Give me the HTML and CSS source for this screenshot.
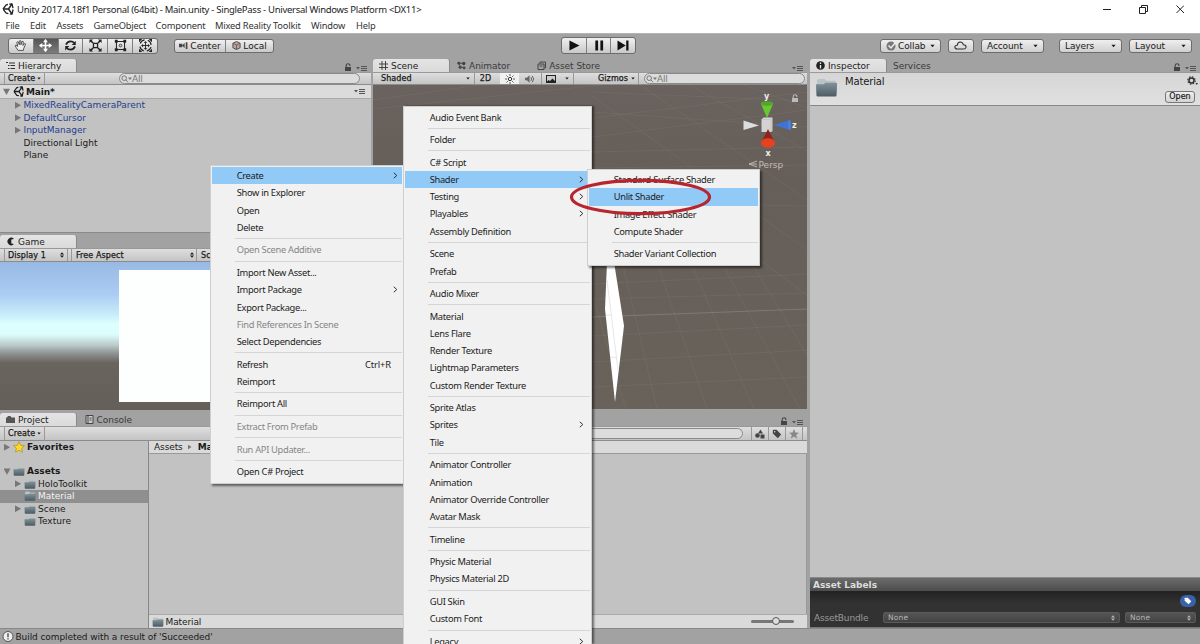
FILE: index.html
```html
<!DOCTYPE html>
<html lang="en">
<head>
<meta charset="utf-8">
<title>Unity 2017.4.18f1 Personal (64bit) - Main.unity</title>
<link rel="stylesheet" href="styles.css">
</head>
<body>
<svg class="defs" width="0" height="0">
  <defs>
    <linearGradient id="fold" x1="0" y1="0" x2="0" y2="1"><stop offset="0" stop-color="#82939b"/><stop offset="1" stop-color="#4c5b63"/></linearGradient>
    <symbol id="i-unity" viewBox="0 0 12 12"><path d="M1 6 4.2 1.8 10 .8 11.2 6 10 11.200 4.200 10.200Z" fill="none" stroke="currentColor" stroke-width="1.300" stroke-linejoin="round" stroke-dasharray="7 1.500"/><path d="M1 6H6.500L10 1M6.500 6 10 11" fill="none" stroke="currentColor" stroke-width="1.400"/></symbol>
    <symbol id="i-folder" viewBox="0 0 24 20"><path d="M2 4Q2 1 4 1H10L12 3H21Q22 3 22 5V9H2Z" fill="#b9c2c4"/><path d="M1 6.500H9L11 5H22Q23.500 5 23 7L22.500 18Q22.500 19.500 21 19.500H3Q1.500 19.500 1.500 18Z" fill="url(#fold)"/></symbol>
    <symbol id="i-lock" viewBox="0 0 8 9"><path d="M2.200 4V2.500Q2.300.7 4.200.7 6 .7 6 3" fill="none" stroke="currentColor" stroke-width="1.100"/><path d="M1 4H7V8H1Z" fill="currentColor"/></symbol>
    <symbol id="i-menu" viewBox="0 0 12 7"><path d="M0 2H4L2 4.400Z" fill="currentColor"/><path d="M5 1.500H11M5 3.500H11M5 5.500H11" stroke="currentColor" stroke-width="1"/></symbol>
    <symbol id="i-search" viewBox="0 0 11 8"><circle cx="3.200" cy="3.200" r="2.300" fill="none" stroke="currentColor"/><path d="M4.800 4.800 7 7.300" stroke="currentColor"/><path d="M7 2.500H11L9 5Z" fill="currentColor"/></symbol>
    <symbol id="i-down" viewBox="0 0 6 4"><path d="M.5.500H5.500L3 3.500Z" fill="currentColor"/></symbol>
    <symbol id="i-updown" viewBox="0 0 4 6"><path d="M0 2.500 2 .3 4 2.500ZM0 3.500 2 5.700 4 3.500Z" fill="currentColor"/></symbol>
    <symbol id="i-tag" viewBox="0 0 12 12"><path d="M1 2Q1 1 2 1H5.500L11 6.500 7 11 1 5.500Z" fill="currentColor"/><circle cx="3.200" cy="3.200" r=".9" fill="#ddd"/></symbol>
    <symbol id="i-chev" viewBox="0 0 5 7"><path d="M.8.800 3.800 3.500.8 6.200" fill="none" stroke="#333" stroke-width="1"/></symbol>
  </defs>
</svg>

<div class="window">
  <header class="titlebar">
    <svg class="logo"><use href="#i-unity"/></svg>
    <span class="title">Unity 2017.4.18f1 Personal (64bit) - Main.unity - SinglePass - Universal Windows Platform &lt;DX11&gt;</span>
    <svg class="winctl" viewBox="0 0 84 12"><path d="M3 6.500H11M39.500 4.500H45.500V10.500H39.500ZM41.500 4V2.500H47.500V8.500H46M76.500 2.500 84 10M84 2.500 76.500 10" fill="none" stroke="#222" stroke-width="1"/></svg>
  </header>
  <nav class="menubar">
    <span class="m1">File</span><span class="m2">Edit</span><span class="m3">Assets</span><span class="m4">GameObject</span><span class="m5">Component</span><span class="m6">Mixed Reality Toolkit</span><span class="m7">Window</span><span class="m8">Help</span>
  </nav>

  <div class="toolbar">
    <div class="btns tools">
      <span><svg viewBox="0 0 16 16"><path d="M5 14Q2 10 1.500 8 2 6.500 4.500 9L3.500 4Q4.500 2.500 5.500 4L6.500 7 6.500 2.500Q7.500 1 8.500 2.500V7L10 3Q11.500 2.200 11.500 4L11 8 13 5.500Q14.500 5.500 14 7L12 11.500 11.500 14Z" fill="#eee" stroke="#333"/></svg></span>
      <span class="on"><svg viewBox="0 0 16 16"><path d="M8 1V15M1 8H15" stroke="#fff" stroke-width="2"/><path d="M8 0 11 4H5ZM8 16 5 12H11ZM0 8 4 5V11ZM16 8 12 11V5Z" fill="#fff"/></svg></span>
      <span><svg viewBox="0 0 16 16"><path d="M2.500 7Q4 3 8 3 11 3 12.500 5M13.500 9Q12 13 8 13 5 13 3.500 11" fill="none" stroke="#222" stroke-width="2.200"/><path d="M14.500 2V7.500H9.500ZM1.500 14V8.500H6.500Z" fill="#222"/></svg></span>
      <span><svg viewBox="0 0 16 16"><path d="M5.500 5.500H10.500V10.500H5.500Z" fill="none" stroke="#222" stroke-width="1.600"/><path d="M2 2 5 5M14 2 11 5M2 14 5 11M14 14 11 11" stroke="#222" stroke-width="1.800"/><path d="M.5.500H5L.5 5ZM15.500.5V5L11 .5ZM.5 15.500V11L5 15.500ZM15.500 15.500H11L15.500 11Z" fill="#222"/></svg></span>
      <span><svg viewBox="0 0 16 16"><path d="M3 3H13V13H3Z" fill="none" stroke="#222" stroke-width="1.300"/><path d="M1 1H4.500V4.500H1ZM11.500 1H15V4.500H11.500ZM1 11.500H4.500V15H1ZM11.500 11.500H15V15H11.500Z" fill="#222"/><circle cx="8" cy="8" r="1.600" fill="none" stroke="#222"/></svg></span>
      <span><svg viewBox="0 0 16 16"><circle cx="8" cy="8" r="7" fill="none" stroke="#222" stroke-width="1.500" stroke-dasharray="7 4" stroke-dashoffset="-2"/><path d="M8 4V12M4 8H12" stroke="#222" stroke-width="1.100"/><path d="M8 2.500 10 5H6ZM8 13.500 6 11H10ZM2.500 8 5 6V10ZM13.500 8 11 10V6ZM0 0H4L0 4ZM16 0V4L12 0ZM0 16V12L4 16ZM16 16H12L16 12Z" fill="#222"/></svg></span>
    </div>
    <div class="btns pivot">
      <span class="center"><svg viewBox="0 0 8 8"><path d="M0 2.500H3V5.500H0ZM3 4 5 1.500V6.500ZM6 1H7.500V7H6Z" fill="#444"/></svg>Center</span>
      <span class="local"><svg viewBox="0 0 10 10"><path d="M5 .5 9 2.500V7.500L5 9.500 1 7.500V2.500Z" fill="#aaa" stroke="#444"/><path d="M1 2.500 5 4.500 9 2.500M5 4.500V9.500" stroke="#944" fill="none"/></svg>Local</span>
    </div>
    <div class="btns play">
      <span><svg viewBox="0 0 12 12"><path d="M1 .5 12 6 1 11.500Z" fill="#111"/></svg></span>
      <span><svg viewBox="0 0 12 12"><path d="M2 .5H5V11.500H2ZM7.500.5H10.500V11.500H7.500Z" fill="#111"/></svg></span>
      <span><svg viewBox="0 0 12 12"><path d="M0 .5 9 6 0 11.500ZM9.500.5H12V11.500H9.500Z" fill="#111"/></svg></span>
    </div>
    <div class="account">
      <span class="dd w-collab"><svg class="chk" viewBox="0 0 10 10"><circle cx="5" cy="5" r="4.500" fill="#777"/><path d="M2.500 4.500 5 7 9.500 1.500" stroke="#eee" stroke-width="1.500" fill="none"/></svg>Collab<svg class="dn"><use href="#i-down"/></svg></span>
      <span class="dd w-cloud"><svg viewBox="0 0 12 8"><path d="M3 7.300Q.8 7 .8 5.300 1 3.700 3 3.700 3.300 1 5.700.8 8 .8 8.600 3.300 11.200 3.400 11.200 5.400 11 7.200 9 7.300Z" fill="none" stroke="#333"/></svg></span>
      <span class="dd w-acc">Account<svg class="dn"><use href="#i-down"/></svg></span>
      <span class="dd w-lay">Layers<svg class="dn"><use href="#i-down"/></svg></span>
      <span class="dd w-out">Layout<svg class="dn"><use href="#i-down"/></svg></span>
    </div>
  </div>

  <main class="workspace">
    <div class="main-col">
      <div class="upper">
        <div class="left-col">
          <section class="panel hierarchy">
            <div class="tabs"><span class="tab on"><svg class="ti" viewBox="0 0 9 8"><path d="M0 1H2M3 1.500H9M2 4H3.500M4.500 4H9M2 7H3.500M4.500 7H9" stroke="#333"/></svg>Hierarchy</span><span class="tabtools"><svg class="lock"><use href="#i-lock"/></svg><svg class="mn"><use href="#i-menu"/></svg></span></div>
            <div class="strip"><span class="mini create">Create <svg class="dn s"><use href="#i-down"/></svg></span><span class="search hs"><svg><use href="#i-search"/></svg>All</span></div>
            <div class="scene-head"><i class="tri open"></i><svg class="ulogo"><use href="#i-unity"/></svg><b>Main*</b><svg class="mn"><use href="#i-menu"/></svg></div>
            <ul class="tree">
              <li class="blue"><i class="tri"></i>MixedRealityCameraParent</li>
              <li class="blue"><i class="tri"></i>DefaultCursor</li>
              <li class="blue"><i class="tri"></i>InputManager</li>
              <li><i></i>Directional Light</li>
              <li><i></i>Plane</li>
            </ul>
          </section>
          <section class="panel game">
            <div class="tabs"><span class="tab on"><svg class="ti" viewBox="0 0 9 8"><path d="M8 1.500A3.700 3.700 0 1 0 8 6.500L5.300 6V2Z" fill="#222"/></svg>Game</span></div>
            <div class="strip"><span class="mini disp">Display 1<svg class="ud"><use href="#i-updown"/></svg></span><span class="mini aspect">Free Aspect<svg class="ud"><use href="#i-updown"/></svg></span><span class="mini scale">Scale</span></div>
            <div class="game-view"><div class="plane"></div></div>
          </section>
        </div>
        <section class="panel scene">
          <div class="tabs"><span class="tab on"><svg class="ti" viewBox="0 0 9 9"><path d="M3 0V9M6.500 0V9M0 3H9M0 6.500H9" stroke="#444"/></svg>Scene</span><span class="tab anim"><svg class="ti" viewBox="0 0 10 9"><path d="M2 2H7.500M2 2 4 6 8 7" stroke="#444" stroke-width="1" fill="none"/><circle cx="2" cy="2" r="1.600" fill="#444"/><circle cx="7.500" cy="2.200" r="1.900" fill="#444"/><circle cx="3.500" cy="6.500" r="1.700" fill="#444"/><circle cx="8" cy="7.200" r="1.500" fill="#444"/></svg>Animator</span><span class="tab store"><svg class="ti" viewBox="0 0 9 9"><path d="M1 3H7V8.500H1ZM3 2.500V1H8.500V7H7.500M2.500 5H5.500" stroke="#444" fill="none"/></svg>Asset Store</span><span class="tabtools"><svg class="mn"><use href="#i-menu"/></svg></span></div>
          <div class="strip">
            <span class="mini shaded">Shaded<svg class="dn s"><use href="#i-down"/></svg></span><span class="mini twod">2D</span><span class="mini sun"><svg viewBox="0 0 10 10"><circle cx="5" cy="5" r="1.700" fill="none" stroke="#333"/><path d="M5 0V2M5 8V10M0 5H2M8 5H10M1.500 1.500 2.800 2.800M7.200 7.200 8.500 8.500M8.500 1.500 7.200 2.800M2.800 7.200 1.500 8.500" stroke="#333" stroke-width=".8"/></svg></span><span class="mini snd"><svg viewBox="0 0 11 10"><path d="M0 3.500H2L5 1V9L2 6.500H0Z" fill="#666"/><path d="M6.500 3Q8 5 6.500 7M8 1.500Q11 5 8 8.500" fill="none" stroke="#555"/></svg></span><span class="mini img"><svg viewBox="0 0 10 8"><path d="M0 0H10V8H0Z" fill="#222"/><path d="M1 6.500V1H9V6L6.500 3.500 4 6 2.500 5Z" fill="#ccc"/></svg></span><span class="mini imgd"><svg class="dn s"><use href="#i-down"/></svg></span><span class="mini giz">Gizmos<svg class="dn s"><use href="#i-down"/></svg></span><span class="search ss"><svg><use href="#i-search"/></svg>All</span>
          </div>
          <div class="scene-view">
            <svg viewBox="373 85 434 324" width="434" height="324">
              <g stroke="#a59d96" stroke-opacity=".13" fill="none">
                <path d="M373 100 480 85M373 109 600 85M592 118 807 92M592 137 807 110M592 112 807 127M592 152 807 147M592 92 807 101M592 168 807 165M690 85 807 151M640 85 807 200M592 96 807 250M745 85 807 108M759 205 807 206M740 245 807 295M592 284 807 274M592 299 807 293M592 336 807 325M592 362 807 350M592 387 807 377M623 265 657 409M658 265 707 409M692 265 754 409M723 265 800 409M753 265 807 355M594 300 626 409"/>
                <path d="M592 317 807 309" stroke-opacity=".4"/>
              </g>
              <path d="M607 262 614 262 624 326 615 402 605 309Z" fill="#fff"/><path d="M607 280 618 370M606 315 612 315M611 357 617 358" stroke="#ddd" stroke-width=".7"/>
              <path d="M743.500 120.500V130L759 125.500Z" fill="#ddd"/>
              <path d="M761 104 767 118 773 104Z" fill="#67c832"/><ellipse cx="767" cy="103.500" rx="6.300" ry="2.300" fill="#55a52b"/>
              <path d="M790 120 774 125 790 130Z" fill="#3f74d5"/><ellipse cx="789.500" cy="125" rx="1.500" ry="5" fill="#4a80e2"/>
              <path d="M761.500 119.500 763.500 117.500H772.500V131L771 132H761.500Z" fill="#d3d3d3"/><path d="M771 119.500V132M762 119.500H771" stroke="#bbb" fill="none" stroke-width=".6"/>
              <path d="M768 129 761.500 142H774.500Z" fill="#8e241c"/><ellipse cx="768" cy="143" rx="7.200" ry="4.700" fill="#e8411f"/>
              <g class="axis"><text x="764" y="99">y</text><text x="792" y="128">z</text><text x="765.500" y="156">x</text></g>
              <path d="M757 161 749 164 757 167M749 164H757" stroke="#b9b4b0" fill="none"/>
              <text class="persp" x="758.500" y="167.500">Persp</text>
              <svg x="791" y="94" width="8" height="9" color="#bbb"><use href="#i-lock"/></svg>
            </svg>
          </div>
        </section>
      </div>

      <section class="panel project">
        <div class="tabs"><span class="tab on"><svg class="ti" viewBox="0 0 9 8"><path d="M0 2H1L2 .5H4.500L5.500 2H9V7.500H0Z" fill="#555"/></svg>Project</span><span class="tab cons"><svg class="ti" viewBox="0 0 8 9"><path d="M.5.500H7.500V8.500H.5Z" fill="#ccc" stroke="#444"/><path d="M2.500.5V8M4 3H6M4 5H6" stroke="#444"/></svg>Console</span><span class="tabtools"><svg class="lock"><use href="#i-lock"/></svg><svg class="mn"><use href="#i-menu"/></svg></span></div>
        <div class="strip"><span class="mini create">Create <svg class="dn s"><use href="#i-down"/></svg></span><span class="search ps"></span><span class="mini pic"><svg viewBox="0 0 10 9"><path d="M5.500 0 8 4H3ZM5.500 5H9.500V9H5.500Z" fill="#444"/><circle cx="2.500" cy="6" r="2.300" fill="#444"/></svg></span><span class="mini pic"><svg viewBox="0 0 12 12" color="#444"><use href="#i-tag"/></svg></span><span class="mini pic last"><svg viewBox="0 0 10 10"><path d="M5 0 6.400 3.500 10 3.700 7.200 6 8.200 9.700 5 7.600 1.800 9.700 2.800 6 0 3.700 3.600 3.500Z" fill="#888"/></svg></span></div>
        <div class="project-body">
          <ul class="folders">
            <li class="root"><i class="tri"></i><svg class="star" viewBox="0 0 12 12"><path d="M6 .7 7.600 4.300 11.500 4.700 8.600 7.300 9.500 11.200 6 9.200 2.500 11.200 3.400 7.300.5 4.700 4.400 4.300Z" fill="#ffd928" stroke="#b98d13" stroke-width=".7"/></svg><b>Favorites</b></li>
            <li class="root gap"><i class="tri open"></i><svg class="fi"><use href="#i-folder"/></svg><b>Assets</b></li>
            <li><i class="tri"></i><svg class="fi"><use href="#i-folder"/></svg>HoloToolkit</li>
            <li class="sel"><i></i><svg class="fi"><use href="#i-folder"/></svg>Material</li>
            <li><i class="tri"></i><svg class="fi"><use href="#i-folder"/></svg>Scene</li>
            <li><i></i><svg class="fi"><use href="#i-folder"/></svg>Texture</li>
          </ul>
          <div class="files">
            <div class="crumbs">Assets<i class="tri"></i><b>Material</b></div>
            <div class="files-area"></div>
            <div class="files-foot"><svg class="fi"><use href="#i-folder"/></svg>Material<span class="slider"><i></i></span></div>
          </div>
        </div>
      </section>
    </div>

    <section class="panel inspector">
      <div class="tabs"><span class="tab on"><svg class="ti" viewBox="0 0 9 9"><circle cx="4.500" cy="4.500" r="4.300" fill="#222"/><path d="M4.500 1.500V3M4.500 4V7.500" stroke="#eee" stroke-width="1.300"/></svg>Inspector</span><span class="tab serv">Services</span><span class="tabtools"><svg class="lock"><use href="#i-lock"/></svg><svg class="mn"><use href="#i-menu"/></svg></span></div>
      <div class="insp-head"><svg class="bigfold"><use href="#i-folder"/></svg><span class="name">Material</span><span class="right"><svg class="gear" viewBox="0 0 11 10"><circle cx="4.500" cy="4.500" r="2.500" fill="none" stroke="#333" stroke-width="1.500"/><circle cx="4.500" cy="4.500" r="3.700" fill="none" stroke="#333" stroke-width="1.200" stroke-dasharray="1.500 1.400"/><path d="M8.500 7H11L9.700 9Z" fill="#333"/></svg><span class="open">Open</span></span></div>
      <div class="insp-body"></div>
      <div class="labels-head">Asset Labels</div>
      <div class="labels">
        <span class="pill"><svg viewBox="0 0 12 12" color="#fff"><use href="#i-tag"/></svg></span>
        <div class="bundle"><span class="bl">AssetBundle</span><span class="sel1">None<svg class="ud"><use href="#i-updown"/></svg></span><span class="sel2">None<svg class="ud"><use href="#i-updown"/></svg></span></div>
      </div>
    </section>
  </main>
  <footer class="status"><svg viewBox="0 0 12 12"><circle cx="6" cy="5.500" r="5" fill="#eee" stroke="#555"/><path d="M6 2.300V6.200M6 7.300V8.600" stroke="#444" stroke-width="1.300"/></svg>Build completed with a result of 'Succeeded'</footer>
</div>

<ul class="ctx ctx-assets">
  <li class="hot">Create<svg class="chev"><use href="#i-chev"/></svg></li><li>Show in Explorer</li><li>Open</li><li>Delete</li><li class="sep"></li>
  <li class="off">Open Scene Additive</li><li class="sep"></li>
  <li>Import New Asset...</li><li>Import Package<svg class="chev"><use href="#i-chev"/></svg></li><li>Export Package...</li><li class="off">Find References In Scene</li><li>Select Dependencies</li><li class="sep"></li>
  <li>Refresh<span class="key">Ctrl+R</span></li><li>Reimport</li><li class="sep"></li>
  <li>Reimport All</li><li class="sep"></li>
  <li class="off">Extract From Prefab</li><li class="sep"></li>
  <li class="off">Run API Updater...</li><li class="sep"></li>
  <li>Open C# Project</li>
</ul>
<ul class="ctx ctx-create">
  <li>Audio Event Bank</li><li class="sep"></li>
  <li>Folder</li><li class="sep"></li>
  <li>C# Script</li><li class="hot">Shader<svg class="chev"><use href="#i-chev"/></svg></li><li>Testing<svg class="chev"><use href="#i-chev"/></svg></li><li>Playables<svg class="chev"><use href="#i-chev"/></svg></li><li>Assembly Definition</li><li class="sep"></li>
  <li>Scene</li><li>Prefab</li><li class="sep"></li>
  <li>Audio Mixer</li><li class="sep"></li>
  <li>Material</li><li>Lens Flare</li><li>Render Texture</li><li>Lightmap Parameters</li><li>Custom Render Texture</li><li class="sep"></li>
  <li>Sprite Atlas</li><li>Sprites<svg class="chev"><use href="#i-chev"/></svg></li><li>Tile</li><li class="sep"></li>
  <li>Animator Controller</li><li>Animation</li><li>Animator Override Controller</li><li>Avatar Mask</li><li class="sep"></li>
  <li>Timeline</li><li class="sep"></li>
  <li>Physic Material</li><li>Physics Material 2D</li><li class="sep"></li>
  <li>GUI Skin</li><li>Custom Font</li><li class="sep"></li>
  <li>Legacy<svg class="chev"><use href="#i-chev"/></svg></li>
</ul>
<ul class="ctx ctx-shader">
  <li>Standard Surface Shader</li><li class="hot">Unlit Shader</li><li>Image Effect Shader</li><li>Compute Shader</li><li class="sep"></li>
  <li>Shader Variant Collection</li>
</ul>
<svg class="ring" viewBox="0 0 144 38"><ellipse cx="71.500" cy="19" rx="69" ry="16.700" fill="none" stroke="#b8252f" stroke-width="3.200"/></svg>
</body>
</html>
```
FILE: styles.css
```css
* { box-sizing: border-box; }
body { margin: 0; width: 1200px; height: 644px; overflow: hidden; position: relative; font-family: "DejaVu Sans", sans-serif; font-size: 9px; color: #1a1a1a; background: #a2a2a2; }
ul { list-style: none; margin: 0; padding: 0; }
svg { display: block; flex: none; }
.defs { position: absolute; }
.window { display: flex; flex-direction: column; width: 1200px; height: 644px; white-space: nowrap; }

.titlebar { display: flex; align-items: center; height: 18px; background: #fff; font-family: "Noto Sans", sans-serif; font-size: 9.5px; letter-spacing: -.28px; color: #222; padding-left: 2px; }
.logo { width: 12px; height: 12px; margin-right: 3px; }
.winctl { width: 84px; height: 12px; margin-left: auto; margin-right: 16px; }
.menubar { display: flex; align-items: center; height: 15px; background: #fff; font-family: "Noto Sans", sans-serif; font-size: 9.3px; letter-spacing: -.18px; color: #333; padding-left: 5.5px; }
.m1 { width: 24.500px; } .m2 { width: 26.500px; } .m3 { width: 37px; } .m4 { width: 62px; } .m5 { width: 59.500px; } .m6 { width: 96px; } .m7 { width: 45px; }

.toolbar { display: flex; align-items: center; height: 26px; padding: 0 0 1.5px 8px; background: #a2a2a2; border-top: 1px solid #b4b4b4; }
.btns { display: flex; height: 16px; border: 1px solid #6c6c6c; border-radius: 3px; background: linear-gradient(#f0f0f0, #c9c9c9); overflow: hidden; }
.btns span { display: flex; align-items: center; justify-content: center; border-left: 1px solid #808080; }
.btns span:first-child { border-left: 0; }
.tools { width: 150px; }
.tools span { flex: 1; }
.tools .on { background: linear-gradient(#555, #7c7c7c); }
.tools svg { width: 13px; height: 13px; }
.pivot { width: 100px; height: 14px; margin-left: 16px; }
.pivot svg { width: 9px; height: 9px; margin-right: 2px; }
.pivot .center { width: 50px; } .pivot .local { flex: 1; }
.play { width: 75px; height: 17px; margin-left: 287px; }
.play span { flex: 1; }
.play svg { width: 12px; height: 11px; }
.account { display: flex; margin-left: 244px; }
.dd { display: flex; align-items: center; height: 14px; padding: 0 5px; border: 1px solid #6c6c6c; border-radius: 3px; background: linear-gradient(#efefef, #cfcfcf); letter-spacing: -.1px; }
.dn { width: 5px; height: 4px; margin-left: auto; }
.dn.s { width: 4px; height: 3px; }
.ud { width: 4px; height: 6px; margin-left: auto; }
.chk { width: 10px; height: 10px; margin-right: 2px; }
.w-collab { width: 61px; } .w-cloud { width: 26px; margin-left: 7px; } .w-cloud svg { width: 13px; height: 9px; }
.w-acc { width: 63px; margin-left: 7px; } .w-lay { width: 63px; margin-left: 15px; } .w-out { width: 63px; margin-left: 7px; }

.workspace { display: flex; height: 569px; }
.main-col { width: 807px; display: flex; flex-direction: column; }
.upper { display: flex; height: 353px; gap: 2px; }
.left-col { width: 371px; display: flex; flex-direction: column; }
.panel { display: flex; flex-direction: column; }
.tabs { display: flex; height: 13px; flex: none; align-items: stretch; color: #3a3a3a; }
.tab { display: flex; align-items: center; padding: 0 6px; letter-spacing: -.03px; }
.tab.on { width: 77px; background: linear-gradient(#e4e4e4, #dadada); border-radius: 3px 3px 0 0; border-right: 1px solid #888; color: #222; }
.ti { width: 9px; height: 9px; margin-right: 3px; }
.tabtools { display: flex; margin-left: auto; align-items: flex-end; gap: 4px; padding: 0 3px 0 0; color: #444; }
.lock { width: 8px; height: 9px; }
.mn { width: 12px; height: 7px; color: #555; }
.strip { display: flex; align-items: stretch; height: 13px; flex: none; background: linear-gradient(#dedede, #c4c4c4); border-top: 1px solid #999; border-bottom: 1px solid #8c8c8c; font-size: 8px; }
.mini { display: flex; align-items: center; border-left: 1px solid #999; -webkit-text-stroke: .25px #1a1a1a; letter-spacing: .1px; }
.create { width: 41px; margin-left: 4px; padding: 0 3px 0 3px; border-right: 1px solid #999; }
.search { display: flex; align-items: center; height: 11px; border: 1px solid #8a8a8a; border-radius: 6px; background: #dcdcdc; color: #777; font-size: 9px; letter-spacing: -.2px; padding-left: 1px; }
.search svg { width: 11px; height: 8px; }
.hs { width: 241px; margin-left: 74px; }

.hierarchy { height: 174px; border-bottom: 1px solid #8a8a8a; }
.scene-head { display: flex; align-items: center; height: 14px; flex: none; background: #dbdbdb; border-bottom: 1px solid #aaa; padding-right: 5px; }
.scene-head .mn { margin-left: auto; }
.scene-head b { letter-spacing: -.15px; }
.ulogo { width: 11px; height: 11px; margin: 0 2px 0 3px; }
.tri { width: 7px; height: 7px; background: #777; clip-path: polygon(5% 0, 95% 50%, 5% 100%); flex: none; }
.tri.open { clip-path: polygon(0 10%, 100% 10%, 50% 100%); margin-left: 3px; }
.tree { background: #c2c2c2; flex: 1; }
.tree li { display: flex; align-items: center; height: 12.500px; padding-left: 14.5px; }
.tree li i:not(.tri) { width: 7px; }
.tree li i { margin-right: 2px; }
.blue { color: #24408e; }

.game { margin-top: 2px; height: 175px; }
.game .strip { height: 14px; }
.disp { width: 64px; margin-left: 4px; padding: 0 3px 0 3px; border-right: 1px solid #999; }
.aspect { width: 125px; margin-left: 3px; padding: 0 2px 0 4px; }
.scale { flex: 1; padding-left: 4px; }
.game-view { height: 148px; background: linear-gradient(#97b9e3 0, #abcdf4 22%, #c6ecfa 35%, #dcffff 42%, #dcfdfc 49%, #bccbcb 56%, #8c9190 62%, #6a645f 68%, #655f59 100%); padding: 8px 0 0 119px; }
.plane { width: 133px; height: 132px; background: #fdfefe; }

.scene { width: 434px; }
.anim { margin-left: 1px; } .store { margin-left: 15px; }
.shaded { width: 97px; margin-left: 4px; padding: 0 4px; border-left: 0; }
.twod { width: 26px; padding-right: 4px; justify-content: center; }
.sun { width: 19px; justify-content: center; background: #f1f1f1; border-left: 0; } .snd { width: 22px; justify-content: center; border-left: 0; } .img { width: 19px; justify-content: center; } .imgd { width: 13px; padding-right: 4px; border-left: 0; }
.img svg { width: 10px; height: 8px; } .sun svg, .snd svg { width: 10px; height: 10px; }
.giz { width: 66px; padding: 0 3px 0 24px; border-right: 1px solid #999; }
.ss { width: 161px; margin-left: 5px; }
.scene-view { height: 324px; background: linear-gradient(#69625e, #665e58 30%, #69625b); overflow: hidden; }
.axis text { font: bold 8px "DejaVu Sans", sans-serif; fill: #eee; }
.persp { font: 9px "DejaVu Sans", sans-serif; fill: #c1bcb8; }

.project { height: 216px; padding-top: 1px; }
.project .strip { height: 15px; align-items: center; }
.project .strip .mini { align-self: stretch; }
.ps { width: 170px; margin-left: auto; margin-right: 8px; }
.pic { width: 17px; justify-content: center; } .pic svg { width: 10px; height: 10px; }
.last { width: 18px; border-right: 1px solid #999; margin-right: 4px; }
.cons { margin-left: 1.5px; }
.project-body { display: flex; flex: 1; }
.folders { width: 149px; background: #c2c2c2; border-right: 1px solid #888; }
.folders li { display: flex; align-items: center; height: 12.500px; padding-left: 14.5px; }
.folders i:not(.tri) { width: 7px; }
.folders .root { padding-left: 3.5px; }
.folders .root .open { margin-left: 0; }
.folders .gap { margin-top: 11.500px; }
.folders .sel { background: #8f8f8f; color: #f2f2f2; }
.fi { width: 12px; height: 10px; margin: 0 2px 0 2.5px; }
.star { width: 12px; height: 12px; margin: 0 2px 0 2.5px; }
.files { flex: 1; display: flex; flex-direction: column; }
.crumbs { display: flex; align-items: center; height: 13px; background: #dadada; border-bottom: 1px solid #999; padding-left: 5px; letter-spacing: -.1px; }
.crumbs .tri { width: 4px; height: 5px; margin: 0 6px 0 5px; }
.files-area { flex: 1; background: #c2c2c2; border-right: 1px solid #999; }
.files-foot { display: flex; align-items: center; height: 14px; background: #dadada; border-top: 1px solid #aaa; letter-spacing: -.1px; }
.slider { margin-left: auto; margin-right: 13px; width: 43px; height: 3px; border-radius: 2px; background: #777; position: relative; }
.slider i { position: absolute; left: 21px; top: -3px; width: 8px; height: 8px; border-radius: 50%; background: #ddd; border: 1px solid #555; }

.inspector { width: 390px; margin-left: 3px; }
.insp-head { display: flex; height: 34px; background: linear-gradient(#d6d6d6, #e0e0e0); border-top: 1px solid #999; border-bottom: 1px solid #888; padding: 4px 5px 0; }
.bigfold { width: 23px; height: 21px; }
.name { font-size: 10px; letter-spacing: -.15px; margin: -1px 0 0 7px; }
.right { margin-left: auto; display: flex; flex-direction: column; align-items: flex-end; }
.gear { width: 11px; height: 10px; margin: -1px -3px 5px 0; }
.open:not(.tri) { width: 30px; height: 12px; border: 1px solid #777; border-radius: 3px; background: linear-gradient(#eee, #d2d2d2); font-size: 8px; line-height: 10px; text-align: center; -webkit-text-stroke: .2px #1a1a1a; }
.insp-body { flex: 1; background: #c2c2c2; }
.labels-head { height: 14px; background: linear-gradient(#6c6c6c, #4c4c4c); border-top: 1px solid #888; color: #ddd; font-weight: bold; padding-left: 3px; line-height: 14px; }
.labels { height: 37px; background: linear-gradient(#222, #323232 35%); border-bottom: 1px solid #777; display: flex; flex-direction: column; align-items: flex-end; padding: 4px 4px 0 4px; }
.pill { width: 16px; height: 12px; border-radius: 6px; background: #3a62a8; display: flex; align-items: center; justify-content: center; margin-bottom: 5px; }
.pill svg { width: 8px; height: 8px; }
.bundle { display: flex; align-items: center; width: 100%; color: #999; letter-spacing: -.15px; }
.bl { width: 69px; }
.sel1, .sel2 { display: flex; align-items: center; height: 11px; padding: 0 4px; border: 1px solid #5a5a5a; border-radius: 2px; background: linear-gradient(#555, #434343); font-size: 7.500px; letter-spacing: .2px; color: #b5b5b5; }
.sel1 { width: 237px; margin-right: 5px; } .sel2 { flex: 1; }
.status { display: flex; align-items: center; height: 16px; border-top: 1px solid #888; background: #a2a2a2; padding: 1px 0 0 2px; letter-spacing: -.08px; }
.status svg { width: 12px; height: 12px; margin-right: 1.5px; }

.ctx { position: absolute; background: #f1f1f1; border: 1px solid #cfcfcf; box-shadow: 2px 2px 2px rgba(0, 0, 0, .5); font-family: "Noto Sans", sans-serif; font-size: 9.300px; letter-spacing: -.3px; color: #1c1c1c; white-space: nowrap; padding: 1px 1px; }
.ctx li { display: flex; align-items: center; height: 17.250px; padding-left: 24.7px; padding-right: 4px; }
.ctx li.sep { height: 1px; margin: 2.200px 0 2.150px 23px; padding: 0; background: #d5d5d5; }
.ctx .hot { background: #91c9f7; }
.ctx .off { color: #868686; }
.chev { width: 5px; height: 7px; margin-left: auto; }
.key { margin-left: auto; margin-right: 7px; letter-spacing: -.1px; }
.ctx-assets { left: 210px; top: 165px; width: 194px; height: 319px; }
.ctx-create { left: 403px; top: 106px; width: 189px; height: 538px; padding-top: 1.4px; box-shadow: 2px 0 2px rgba(0, 0, 0, .5); border-bottom: 0; }
.ctx-create .chev { margin-right: 2px; }
.ctx-shader { left: 587px; top: 169px; width: 173px; height: 97px; }
.ring { position: absolute; left: 569px; top: 178px; width: 144px; height: 38px; }
```
